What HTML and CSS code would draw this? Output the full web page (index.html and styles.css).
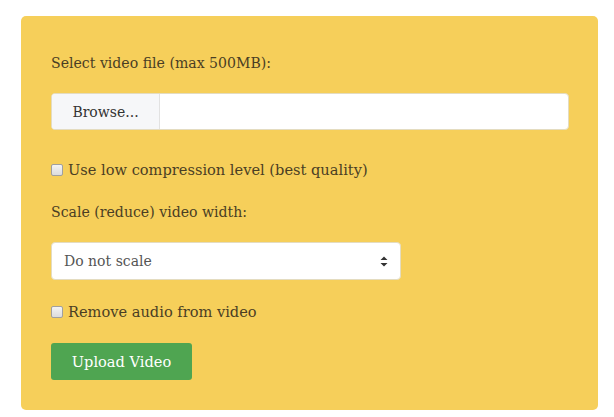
FILE: index.html
```html
<!DOCTYPE html>
<html>
<head>
<meta charset="utf-8">
<link rel="stylesheet" href="styles.css">
</head>
<body>
<form class="panel">
  <label class="field-label">Select video file (max 500MB):</label>
  <div class="file-input">
    <span class="browse">Browse...</span>
    <span class="file-name"></span>
  </div>
  <label class="check check-first"><span class="box"></span>Use low compression level (best quality)</label>
  <label class="field-label field-scale">Scale (reduce) video width:</label>
  <div class="select">
    <span class="select-text">Do not scale</span>
    <span class="arrows">
      <svg width="8" height="11" viewBox="0 0 8 11"><path d="M4 0.5L7.5 4H0.5Z M4 10.5L7.5 7H0.5Z" fill="#333"/></svg>
    </span>
  </div>
  <label class="check check-second"><span class="box"></span>Remove audio from video</label>
  <button type="button" class="upload">Upload Video</button>
</form>
</body>
</html>
```
FILE: styles.css
```css
html, body {
  margin: 0;
  background: #ffffff;
}
body {
  padding: 16px 16px 7px 21px;
  font-family: "DejaVu Serif", "Liberation Serif", serif;
  color: #4a3e24;
}
.panel {
  box-sizing: border-box;
  width: 577px;
  height: 394px;
  background: #f6cf5a;
  border-radius: 5px;
  padding: 36px 30px 30px 30px;
  display: flex;
  flex-direction: column;
  align-items: flex-start;
}
.field-label {
  font-size: 14.1px;
  line-height: 22px;
  height: 22px;
}
.file-input {
  margin-top: 19px;
  box-sizing: border-box;
  width: 518px;
  height: 38px;
  display: flex;
  background: #ffffff;
  border: 1px solid #e4dcc0;
  border-radius: 4px;
  overflow: hidden;
}
.browse {
  width: 107px;
  background: #f6f7f9;
  border-right: 1px solid #e2e2e2;
  display: flex;
  align-items: center;
  justify-content: center;
  font-size: 14px;
  color: #333;
}
.file-name {
  flex: 1;
}
.check {
  display: flex;
  align-items: center;
  font-size: 14.6px;
  line-height: 24px;
  height: 24px;
}
.check-first {
  margin-top: 28px;
}
.check-second {
  margin-top: 20px;
}
.box {
  box-sizing: border-box;
  width: 12px;
  height: 12px;
  margin-right: 5px;
  border: 1px solid #a0a0a0;
  border-radius: 2px;
  background: linear-gradient(#f4f4f4, #dcdcdc);
}
.field-scale {
  margin-top: 19px;
}
.select {
  margin-top: 19px;
  position: relative;
  box-sizing: border-box;
  width: 350px;
  height: 38px;
  background: #fff;
  border: 1px solid #e4dcc0;
  border-radius: 4px;
  display: flex;
  align-items: center;
  padding-left: 12px;
}
.select-text {
  font-size: 14px;
  color: #555;
}
.arrows {
  position: absolute;
  right: 12px;
  top: 13px;
  display: flex;
}
.upload {
  margin-top: 19px;
  width: 141px;
  height: 38px;
  border: 0;
  border-radius: 3px;
  background: #4fa551;
  color: #fff;
  font-family: "DejaVu Serif", "Liberation Serif", serif;
  font-size: 14.6px;
  padding: 0;
}
```
